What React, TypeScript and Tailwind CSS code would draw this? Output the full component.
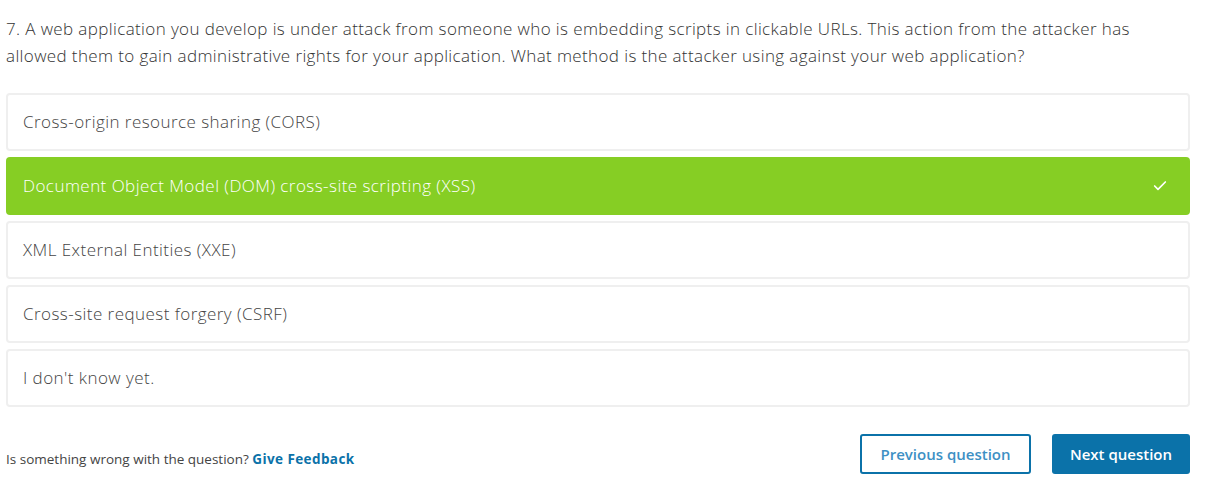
import { Check } from "lucide-react";

const options = [
  { label: "Cross-origin resource sharing (CORS)", selected: false },
  { label: "Document Object Model (DOM) cross-site scripting (XSS)", selected: true },
  { label: "XML External Entities (XXE)", selected: false },
  { label: "Cross-site request forgery (CSRF)", selected: false },
  { label: "I don't know yet.", selected: false },
];

export default function App() {
  return (
    <div className="w-[1218px] h-[487px] bg-white font-['Open_Sans',sans-serif]">
      <div className="w-[1184px] ml-[6px] pt-[15px]">
        {/* Question */}
        <p className="text-[17px] leading-[27px] text-[#333] font-light tracking-[0.38px]">
          7. A web application you develop is under attack from someone who is embedding scripts in clickable URLs. This
          action from the attacker has
          <br />
          allowed them to gain administrative rights for your application. What method is the attacker using against your
          web application?
        </p>

        {/* Answer options */}
        <div className="mt-[24px] flex flex-col gap-[6px]">
          {options.map((opt) => (
            <div
              key={opt.label}
              className={`h-[58px] rounded-[4px] flex items-center justify-between pr-[22px] ${
                opt.selected
                  ? "bg-[#86ce24] text-white pl-[17px]"
                  : "bg-white border-2 border-[#efefef] text-[#444] pl-[15px]"
              }`}
            >
              <span className="text-[17px] font-light tracking-[0.45px]">{opt.label}</span>
              {opt.selected && <Check className="w-[16px] h-[16px]" strokeWidth={2.5} />}
            </div>
          ))}
        </div>

        {/* Footer */}
        <div className="mt-[27px] flex items-center justify-between">
          <p className="text-[13.5px] text-[#444] pt-[10px]">
            Is something wrong with the question?{" "}
            <a href="#" className="font-bold text-[#0b72a9] tracking-[0.4px]">
              Give Feedback
            </a>
          </p>
          <div className="flex gap-[21px]">
            <button className="h-[40px] w-[171px] rounded-[3px] border-2 border-[#0b72a9] text-[#3d90c4] text-[15px] font-semibold">
              Previous question
            </button>
            <button className="h-[40px] w-[138px] rounded-[3px] bg-[#0b72a9] text-white text-[15px] font-semibold">
              Next question
            </button>
          </div>
        </div>
      </div>
    </div>
  );
}
